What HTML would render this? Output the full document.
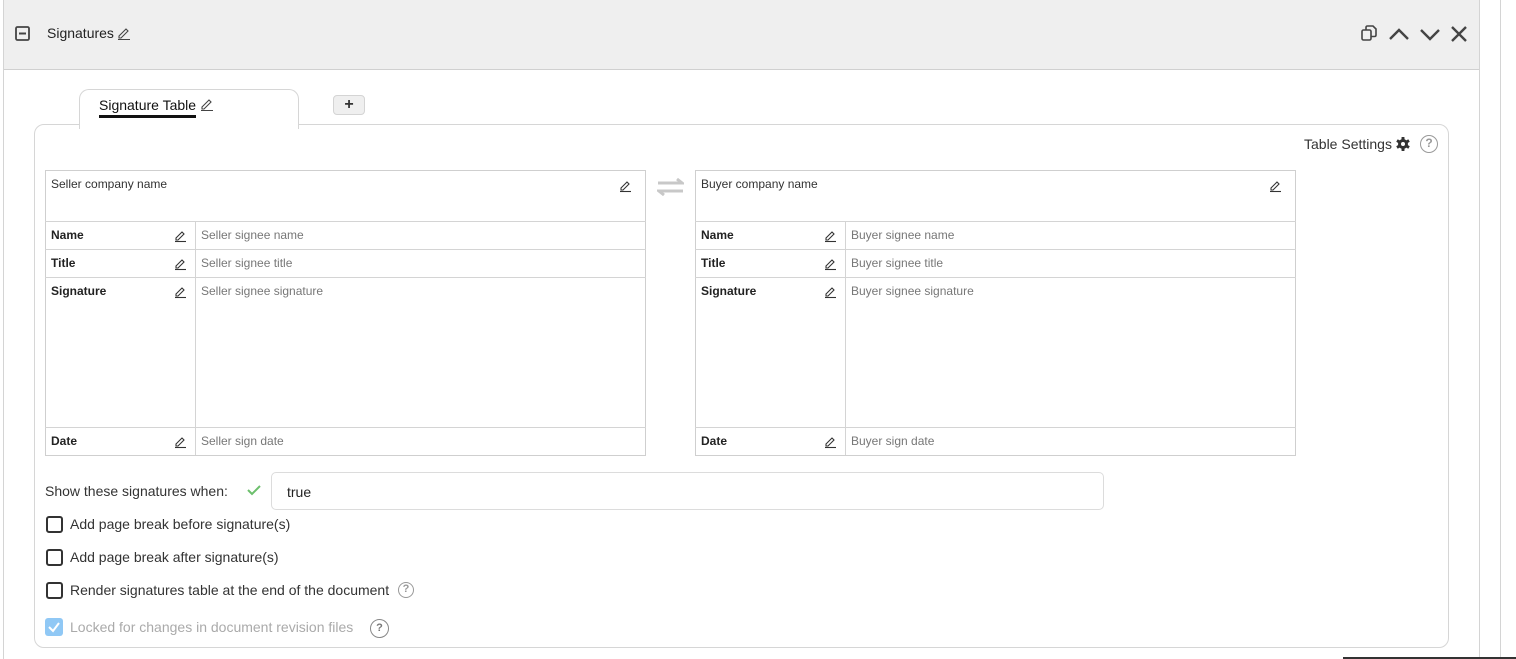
<!DOCTYPE html>
<html><head><meta charset="utf-8"><style>
*{box-sizing:border-box;margin:0;padding:0}
html,body{width:1516px;height:659px;overflow:hidden}
body{background:#fff;font-family:"Liberation Sans",Arial,sans-serif;color:#222;position:relative}
.abs{position:absolute}
.panel{left:3px;top:-1px;width:1477px;height:670px;border:1px solid #d4d4d4;background:#fff}
.hdr{left:4px;top:0;width:1475px;height:70px;background:#efefef;border-bottom:1px solid #d0d0d0}
.card{left:34px;top:124px;width:1415px;height:524px;border:1px solid #d6d6d6;border-radius:10px;background:#fff}
.tab{left:79px;top:89px;width:220px;height:40px;border:1px solid #d6d6d6;border-bottom:none;border-radius:10px 10px 0 0;background:#fff}
.tbl{border:1px solid #cfcfcf;font-size:12px}
.cell{position:absolute;font-size:12px}
.hl{position:absolute;height:1px;background:#d4d4d4}
.vl{position:absolute;width:1px;background:#d4d4d4}
.cb{position:absolute;width:17px;height:17px;border:2px solid #333;border-radius:3px;left:46px}
.lbl{position:absolute;left:70px;font-size:14px;color:#333}
.q{position:absolute;width:16px;height:16px;border:1.5px solid #999;border-radius:50%;font-size:11px;color:#999;text-align:center;line-height:13px;font-weight:bold}
</style></head><body>
<div class="abs panel"></div>
<div class="abs hdr"></div>
<div class="abs" style="left:1500px;top:0;width:1px;height:659px;background:#d4d4d4"></div>
<div class="abs" style="left:1343px;top:657px;width:173px;height:2px;background:#333"></div>
<!-- header -->
<svg class="abs" style="left:14px;top:25px" width="18" height="18"><rect x="2" y="2" width="13" height="13" rx="1.5" fill="none" stroke="#444" stroke-width="1.8"/><line x1="5" y1="8.5" x2="12" y2="8.5" stroke="#444" stroke-width="2"/></svg>
<div class="abs" style="left:47px;top:25px;font-size:14px;color:#222">Signatures</div>
<svg class="abs" style="left:117px;top:26px" width="14" height="14"><path d="M2 10 L9 3 L11 5 L4 12 L2 12 Z" fill="none" stroke="#444" stroke-width="1.1"/><line x1="1" y1="13.5" x2="13" y2="13.5" stroke="#444" stroke-width="1"/></svg>
<svg class="abs" style="left:1360px;top:24px" width="20" height="20"><rect x="2" y="6" width="9" height="10" rx="1.5" fill="none" stroke="#444" stroke-width="1.6"/><path d="M6 6V3.5Q6 2 7.5 2H13L16 5V11Q16 12.5 14.5 12.5H11" fill="none" stroke="#444" stroke-width="1.6"/></svg>
<svg class="abs" style="left:1387px;top:24px" width="24" height="20"><polyline points="3,15 12,6 21,15" fill="none" stroke="#444" stroke-width="2.4"/></svg>
<svg class="abs" style="left:1418px;top:24px" width="24" height="20"><polyline points="3,6 12,15 21,6" fill="none" stroke="#444" stroke-width="2.4"/></svg>
<svg class="abs" style="left:1449px;top:24px" width="20" height="20"><path d="M3 3L17 17M17 3L3 17" stroke="#444" stroke-width="2.4"/></svg>
<!-- card -->
<div class="abs card"></div>
<div class="abs tab"></div>
<div class="abs" style="left:80px;top:122px;width:218px;height:4px;background:#fff"></div>
<div class="abs" style="left:99px;top:97px;font-size:14px;color:#111">Signature Table</div>
<div class="abs" style="left:99px;top:115px;width:97px;height:3px;background:#111"></div>
<svg class="abs" style="left:200px;top:97px" width="14" height="14"><path d="M2 10 L9 3 L11 5 L4 12 L2 12 Z" fill="none" stroke="#444" stroke-width="1.1"/><line x1="1" y1="13.5" x2="13" y2="13.5" stroke="#444" stroke-width="1"/></svg>
<div class="abs" style="left:333px;top:95px;width:32px;height:20px;background:#efefef;border:1px solid #d4d4d4;border-radius:4px;text-align:center;font-size:16px;line-height:17px;font-weight:bold;color:#333">+</div>
<div class="abs" style="left:1304px;top:136px;font-size:14px;color:#333">Table Settings</div>
<svg class="abs" style="left:1395px;top:136px" width="16" height="16" viewBox="0 0 16 16"><g fill="#333"><circle cx="8" cy="8" r="5"/><rect x="6.5" y="1" width="3" height="14" rx="0.5"/><rect x="6.5" y="1" width="3" height="14" rx="0.5" transform="rotate(60 8 8)"/><rect x="6.5" y="1" width="3" height="14" rx="0.5" transform="rotate(120 8 8)"/></g><circle cx="8" cy="8" r="2" fill="#fff"/></svg>
<div class="q" style="left:1420px;top:135px;width:18px;height:18px;line-height:15px;font-size:12px">?</div>

<!-- left -->
<div class="abs tbl" style="left:45px;top:170px;width:601px;height:286px"></div>
<div class="hl" style="left:45px;top:221px;width:601px"></div>
<div class="hl" style="left:45px;top:249px;width:601px"></div>
<div class="hl" style="left:45px;top:277px;width:601px"></div>
<div class="hl" style="left:45px;top:427px;width:601px"></div>
<div class="vl" style="left:195px;top:221px;height:234px"></div>
<div class="cell" style="left:51px;top:177px;color:#333">Seller company name</div>
<div class="cell" style="left:51px;top:228px;font-weight:bold">Name</div>
<div class="cell" style="left:51px;top:256px;font-weight:bold">Title</div>
<div class="cell" style="left:51px;top:284px;font-weight:bold">Signature</div>
<div class="cell" style="left:51px;top:434px;font-weight:bold">Date</div>
<div class="cell" style="left:201px;top:228px;color:#777">Seller signee name</div>
<div class="cell" style="left:201px;top:256px;color:#777">Seller signee title</div>
<div class="cell" style="left:201px;top:284px;color:#777">Seller signee signature</div>
<div class="cell" style="left:201px;top:434px;color:#777">Seller sign date</div>
<!-- right -->
<div class="abs tbl" style="left:695px;top:170px;width:601px;height:286px"></div>
<div class="hl" style="left:695px;top:221px;width:601px"></div>
<div class="hl" style="left:695px;top:249px;width:601px"></div>
<div class="hl" style="left:695px;top:277px;width:601px"></div>
<div class="hl" style="left:695px;top:427px;width:601px"></div>
<div class="vl" style="left:845px;top:221px;height:234px"></div>
<div class="cell" style="left:701px;top:177px;color:#333">Buyer company name</div>
<div class="cell" style="left:701px;top:228px;font-weight:bold">Name</div>
<div class="cell" style="left:701px;top:256px;font-weight:bold">Title</div>
<div class="cell" style="left:701px;top:284px;font-weight:bold">Signature</div>
<div class="cell" style="left:701px;top:434px;font-weight:bold">Date</div>
<div class="cell" style="left:851px;top:228px;color:#777">Buyer signee name</div>
<div class="cell" style="left:851px;top:256px;color:#777">Buyer signee title</div>
<div class="cell" style="left:851px;top:284px;color:#777">Buyer signee signature</div>
<div class="cell" style="left:851px;top:434px;color:#777">Buyer sign date</div>
<!-- pencils -->
<svg width="0" height="0" style="position:absolute"><defs><g id="p"><path d="M2 9 L8 3 L10 5 L4 11 L2 11 Z" fill="none" stroke="#333" stroke-width="1.1"/><line x1="1" y1="12.5" x2="12" y2="12.5" stroke="#333" stroke-width="1.1"/></g></defs></svg>
<svg class="abs" style="left:619px;top:179px" width="13" height="14"><use href="#p"/></svg>
<svg class="abs" style="left:1269px;top:179px" width="13" height="14"><use href="#p"/></svg>
<svg class="abs" style="left:174px;top:229px" width="13" height="14"><use href="#p"/></svg>
<svg class="abs" style="left:174px;top:257px" width="13" height="14"><use href="#p"/></svg>
<svg class="abs" style="left:174px;top:285px" width="13" height="14"><use href="#p"/></svg>
<svg class="abs" style="left:174px;top:435px" width="13" height="14"><use href="#p"/></svg>
<svg class="abs" style="left:824px;top:229px" width="13" height="14"><use href="#p"/></svg>
<svg class="abs" style="left:824px;top:257px" width="13" height="14"><use href="#p"/></svg>
<svg class="abs" style="left:824px;top:285px" width="13" height="14"><use href="#p"/></svg>
<svg class="abs" style="left:824px;top:435px" width="13" height="14"><use href="#p"/></svg>
<svg class="abs" style="left:657px;top:178px" width="27" height="18"><path d="M1 5H25L20 1M26 13H2L7 17" fill="none" stroke="#c8c8c8" stroke-width="3"/></svg>
<!-- bottom -->
<div class="abs" style="left:45px;top:483px;font-size:14px;color:#333">Show these signatures when:</div>
<svg class="abs" style="left:247px;top:484px" width="14" height="12"><polyline points="1,6 5,10 13,2" fill="none" stroke="#6cbf6c" stroke-width="2"/></svg>
<div class="abs" style="left:271px;top:472px;width:833px;height:38px;border:1px solid #dcdcdc;border-radius:5px;font-size:14px;padding:11px 0 0 15px;color:#222">true</div>
<div class="cb" style="top:516px"></div><div class="lbl" style="top:516px">Add page break before signature(s)</div>
<div class="cb" style="top:549px"></div><div class="lbl" style="top:549px">Add page break after signature(s)</div>
<div class="cb" style="top:582px"></div><div class="lbl" style="top:582px">Render signatures table at the end of the document</div>
<div class="q" style="left:398px;top:582px">?</div>
<div class="abs" style="left:45px;top:618px;width:18px;height:18px;border-radius:3px;background:#90c8f5"></div>
<svg class="abs" style="left:47px;top:620px" width="14" height="14"><polyline points="2,7 6,11 12,3" fill="none" stroke="#fff" stroke-width="2"/></svg>
<div class="lbl" style="top:619px;color:#aaa">Locked for changes in document revision files</div>
<div class="q" style="left:370px;top:619px;width:19px;height:19px;line-height:16px;border-color:#888;color:#777">?</div>
</body></html>
